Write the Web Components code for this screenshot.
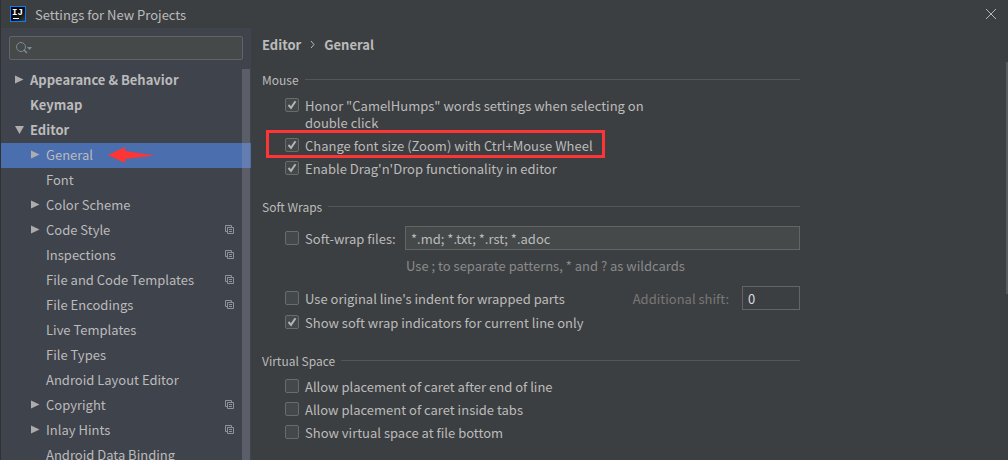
<!DOCTYPE html>
<html lang="en">
<head>
<meta charset="utf-8">
<title>Settings for New Projects</title>
<style>
  html, body {
    margin: 0;
    height: 100%;
    overflow: hidden;
  }
  body {
    background: #3c3f41;
    color: #bbbbbb;
    font-family: "Noto Sans CJK SC", "Noto Sans", sans-serif;
    font-size: 13px;
    line-height: 17px;
  }
</style>
</head>
<body>
<settings-window>
  <title-bar slot="title">Settings for New Projects</title-bar>
  <settings-tree slot="sidebar"></settings-tree>
  <settings-page>
    <settings-section heading="Mouse">
      <check-row checked>Honor "CamelHumps" words settings when selecting on<br>double click</check-row>
      <check-row checked marked>Change font size (Zoom) with Ctrl+Mouse Wheel</check-row>
      <check-row checked>Enable Drag'n'Drop functionality in editor</check-row>
    </settings-section>
    <settings-section heading="Soft Wraps">
      <soft-wrap-options></soft-wrap-options>
    </settings-section>
    <settings-section heading="Virtual Space">
      <check-row>Allow placement of caret after end of line</check-row>
      <check-row>Allow placement of caret inside tabs</check-row>
      <check-row>Show virtual space at file bottom</check-row>
    </settings-section>
  </settings-page>
</settings-window>

<script>
/* Window frame: title bar on top, tree on the left, page on the right. */
class SettingsWindow extends HTMLElement {
  constructor() {
    super();
    this.attachShadow({ mode: 'open' });
    this.shadowRoot.innerHTML = `
      <style>
        :host {
          display: grid;
          grid-template: 28px minmax(0, 1fr) / 250px minmax(0, 1fr);
          height: 100vh;
          box-sizing: border-box;
          border-left: 1px solid #2f3133;
        }
        .title { grid-column: 1 / -1; }
        .sidebar, main { min-width: 0; overflow: hidden; }
        .sidebar { background: #3f434c; }
      </style>
      <div class="title"><slot name="title"></slot></div>
      <div class="sidebar"><slot name="sidebar"></slot></div>
      <main><slot></slot></main>
    `;
  }
}

class TitleBar extends HTMLElement {
  constructor() {
    super();
    this.attachShadow({ mode: 'open' });
    this.shadowRoot.innerHTML = `
      <style>
        :host {
          display: flex;
          align-items: center;
          gap: 9px;
          height: 28px;
          padding: 0 11px 0 9px;
          box-sizing: border-box;
        }
        .name { flex: 1; }
        svg { display: block; }
        button {
          border: 0;
          padding: 0;
          background: none;
          color: #b4b6b7;
        }
      </style>
      <svg width="16" height="16" viewBox="0 0 16 16" aria-hidden="true">
        <defs>
          <linearGradient id="g" x1="0" y1="0" x2="1" y2="1">
            <stop offset="0" stop-color="#000"/>
            <stop offset="0.6" stop-color="#111"/>
            <stop offset="1" stop-color="#444"/>
          </linearGradient>
        </defs>
        <rect x="0.5" y="0.5" width="15" height="15" fill="url(#g)" stroke="#087cfa"/>
        <text x="2" y="9" font-family="Liberation Mono, monospace" font-size="9" font-weight="700" fill="#fff">IJ</text>
        <rect x="3" y="12" width="6" height="1" fill="#fff"/>
      </svg>
      <span class="name"><slot></slot></span>
      <button type="button" aria-label="Close">
        <svg width="12" height="12" viewBox="0 0 12 12" fill="none" stroke="currentColor">
          <path d="M1 1l10 10M11 1L1 11"/>
        </svg>
      </button>
    `;
  }
}

var TREE_ITEMS = [
  { label: 'Appearance & Behavior', level: 0, arrow: 'closed' },
  { label: 'Keymap', level: 0 },
  { label: 'Editor', level: 0, arrow: 'open' },
  { label: 'General', level: 1, arrow: 'closed', selected: true },
  { label: 'Font', level: 1 },
  { label: 'Color Scheme', level: 1, arrow: 'closed' },
  { label: 'Code Style', level: 1, arrow: 'closed', perProject: true },
  { label: 'Inspections', level: 1, perProject: true },
  { label: 'File and Code Templates', level: 1, perProject: true },
  { label: 'File Encodings', level: 1, perProject: true },
  { label: 'Live Templates', level: 1 },
  { label: 'File Types', level: 1 },
  { label: 'Android Layout Editor', level: 1 },
  { label: 'Copyright', level: 1, arrow: 'closed', perProject: true },
  { label: 'Inlay Hints', level: 1, arrow: 'closed', perProject: true },
  { label: 'Android Data Binding', level: 1 },
];

class SettingsTree extends HTMLElement {
  constructor() {
    super();
    this.attachShadow({ mode: 'open' });
  }

  connectedCallback() {
    this.render();
  }

  _escapeHtml(text) {
    var div = document.createElement('div');
    div.textContent = text;
    return div.innerHTML;
  }

  _arrow(state) {
    if (!state) return '';
    var d = state === 'open' ? 'M0 1h9L4.500 9z' : 'M0 0.500l8.500 4L0 8.500z';
    return `<svg width="9" height="9" viewBox="0 0 9 9"><path d="${d}" fill="#adadad"/></svg>`;
  }

  render() {
    var rows = TREE_ITEMS.map((item) => {
      var classes = 'row level-' + item.level + (item.selected ? ' selected' : '');
      return `
        <a class="${classes}" href="#" ${item.selected ? 'aria-current="page"' : ''}>
          <span class="arrow">${this._arrow(item.arrow)}</span>
          <span class="label">${this._escapeHtml(item.label)}</span>
          ${item.selected ? `
            <svg class="pointer" width="48" height="16" viewBox="0 0 48 16">
              <path d="M0 8L17 0V4L47 8.500L17 12V16z" fill="#ff3434"/>
            </svg>` : ''}
          ${item.perProject ? `
            <svg class="copy" width="9" height="9" viewBox="0 0 9 9" fill="none" stroke="#8b949d">
              <path d="M2 6.500H0.500V0.500H6.500V2M2.500 2.500h6v6h-6zM4 4.500h3M4 6.500h3"/>
            </svg>` : ''}
        </a>
      `;
    }).join('');

    this.shadowRoot.innerHTML = `
      <style>
        :host {
          display: flex;
          flex-direction: column;
          height: 100%;
        }
        .search {
          display: flex;
          align-items: center;
          gap: 4px;
          margin: 8px 8px 0;
          height: 24px;
          padding: 0 5px;
          box-sizing: border-box;
          border: 1px solid #646464;
          border-radius: 2px;
          background: #45494a;
        }
        .search input {
          flex: 1;
          min-width: 0;
          border: 0;
          padding: 0;
          outline: none;
          background: none;
          color: inherit;
          font: inherit;
        }
        nav {
          position: relative;
          flex: 1;
          min-height: 0;
          margin-top: 8px;
          overflow: hidden;
        }
        .thumb {
          position: absolute;
          top: 1px;
          right: 1px;
          bottom: 0;
          width: 8px;
          background: rgba(166, 166, 180, 0.28);
        }
        .row {
          display: flex;
          align-items: center;
          height: 25px;
          padding: 0 17px 2px 14px;
          box-sizing: border-box;
          color: inherit;
          text-decoration: none;
          white-space: nowrap;
        }
        .level-0 { font-weight: 700; }
        .level-1 { padding-left: 30px; }
        .selected { background: #4b6eaf; }
        .arrow {
          display: flex;
          width: 15px;
        }
        .copy { margin-left: auto; }
        .pointer { margin-left: 15px; }
      </style>
      <div class="search">
        <svg width="17" height="14" viewBox="0 0 17 14" fill="none" stroke="#7f8b91">
          <circle cx="6" cy="6" r="4.500"/>
          <path d="M9 9l3 3" stroke-width="1.500"/>
          <path d="M12 6h5l-2.500 3z" fill="#7f8b91" stroke="none"/>
        </svg>
        <input type="text" aria-label="Search settings">
      </div>
      <nav aria-label="Settings">
        ${rows}
        <div class="thumb"></div>
      </nav>
    `;
  }
}

class SettingsPage extends HTMLElement {
  constructor() {
    super();
    this.attachShadow({ mode: 'open' });
    this.shadowRoot.innerHTML = `
      <style>
        :host {
          display: block;
          position: relative;
          height: 100%;
          padding: 8px 11px 0;
          box-sizing: border-box;
        }
        h1 {
          display: flex;
          align-items: center;
          gap: 9px;
          margin: 0 0 16px;
          font-size: 13px;
          font-weight: 700;
        }
        h1 svg { display: block; }
        .content {
          display: flex;
          flex-direction: column;
          gap: 16px;
          max-width: 538px;
        }
        .thumb {
          position: absolute;
          top: 34px;
          right: 0;
          width: 2px;
          height: 232px;
          background: #585a5b;
        }
      </style>
      <h1>
        <span>Editor</span>
        <svg width="5" height="9" viewBox="0 0 5 9" fill="none" stroke="#bbb"><path d="M1 1l3 3.500L1 8"/></svg>
        <span>General</span>
      </h1>
      <div class="content"><slot></slot></div>
      <div class="thumb"></div>
    `;
  }
}

class SettingsSection extends HTMLElement {
  constructor() {
    super();
    this.attachShadow({ mode: 'open' });
  }

  connectedCallback() {
    this.shadowRoot.innerHTML = `
      <style>
        :host { display: block; }
        h2 {
          display: flex;
          align-items: center;
          gap: 6px;
          height: 20px;
          margin: 0 0 5px;
          font-size: 12px;
          font-weight: 400;
        }
        h2::after {
          content: "";
          flex: 1;
          height: 1px;
          background: #555555;
        }
        .body {
          display: flex;
          flex-direction: column;
          align-items: flex-start;
          padding-left: 23px;
        }
        ::slotted(soft-wrap-options) { align-self: stretch; }
      </style>
      <h2>${this.getAttribute('heading')}</h2>
      <div class="body"><slot></slot></div>
    `;
  }
}

/* Tick box with its label; "marked" puts the red frame round it. */
class CheckRow extends HTMLElement {
  constructor() {
    super();
    this.attachShadow({ mode: 'open' });
  }

  connectedCallback() {
    this.shadowRoot.innerHTML = `
      <style>
        :host {
          display: block;
          position: relative;
          white-space: nowrap;
        }
        :host([marked])::after {
          content: "";
          position: absolute;
          inset: -4px -12px -1px -19px;
          border: 3px solid #ff3434;
          pointer-events: none;
        }
        label {
          display: flex;
          gap: 6px;
          padding: 3px 0;
        }
        .box {
          display: grid;
          flex: none;
          width: 14px;
          height: 14px;
          margin-top: 1px;
        }
        .box > * { grid-area: 1 / 1; }
        input {
          appearance: none;
          width: 14px;
          height: 14px;
          box-sizing: border-box;
          margin: 0;
          border: 1px solid #6b6b6b;
          border-radius: 2px;
          background: #43494a;
        }
        svg { visibility: hidden; pointer-events: none; }
        input:checked + svg { visibility: visible; }
      </style>
      <label>
        <span class="box">
          <input type="checkbox" ${this.hasAttribute('checked') ? 'checked' : ''}>
          <svg width="14" height="14" viewBox="0 0 14 14" fill="none" stroke="#b4b4b4" stroke-width="2">
            <path d="M3.500 7L6 9.800L10.500 3.200"/>
          </svg>
        </span>
        <span><slot></slot></span>
      </label>
    `;
  }
}

class SoftWrapOptions extends HTMLElement {
  constructor() {
    super();
    this.attachShadow({ mode: 'open' });
    this.shadowRoot.innerHTML = `
      <style>
        :host { display: block; padding-top: 5px; }
        .line {
          display: flex;
          align-items: center;
          gap: 12px;
          height: 24px;
        }
        .files {
          display: grid;
          grid-template-columns: 120px minmax(0, 1fr);
          align-items: center;
          row-gap: 7px;
          margin-bottom: 12px;
        }
        .hint { grid-column: 2; padding-left: 1px; color: #8a8a8a; }
        input {
          height: 24px;
          min-width: 0;
          box-sizing: border-box;
          border: 1px solid #646464;
          padding: 0 5px;
          outline: none;
          background: #45494a;
          color: #bbbbbb;
          font: inherit;
        }
        .shift {
          display: flex;
          align-items: center;
          gap: 13px;
          margin-left: auto;
          color: #777777;
        }
        .shift input {
          width: 58px;
          background: #3c3f41;
          color: #d5dbe0;
        }
      </style>
      <div class="files">
        <check-row>Soft-wrap files:</check-row>
        <input type="text" aria-label="Soft-wrap files" value="*.md; *.txt; *.rst; *.adoc">
        <span class="hint">Use ; to separate patterns, * and ? as wildcards</span>
      </div>
      <div class="line">
        <check-row>Use original line's indent for wrapped parts</check-row>
        <label class="shift">Additional shift: <input type="text" value="0"></label>
      </div>
      <div class="line">
        <check-row checked>Show soft wrap indicators for current line only</check-row>
      </div>
    `;
  }
}

customElements.define('settings-window', SettingsWindow);
customElements.define('title-bar', TitleBar);
customElements.define('settings-tree', SettingsTree);
customElements.define('settings-page', SettingsPage);
customElements.define('settings-section', SettingsSection);
customElements.define('check-row', CheckRow);
customElements.define('soft-wrap-options', SoftWrapOptions);
</script>
</body>
</html>
